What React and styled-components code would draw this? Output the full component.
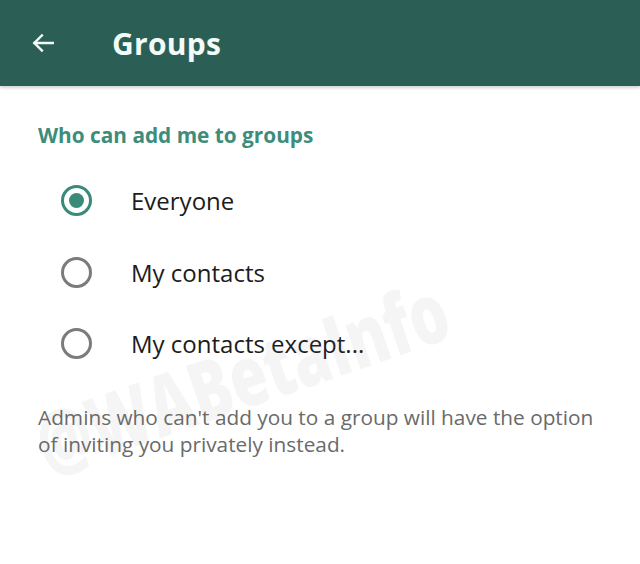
import React, { useState } from "react";
import styled, { createGlobalStyle } from "styled-components";

const GlobalStyle = createGlobalStyle`
  html, body {
    margin: 0;
    padding: 0;
    background: #ffffff;
    font-family: "Open Sans", "Noto Sans", sans-serif;
  }
`;

const Page = styled.div`
  position: relative;
  width: 640px;
  height: 564px;
  overflow: hidden;
  background: #ffffff;
`;

const Toolbar = styled.div`
  height: 86px;
  background: #2b5f56;
  display: flex;
  align-items: center;
  padding-left: 28px;
  box-shadow: 0 2px 3px rgba(0, 0, 0, 0.18);
`;

const BackButton = styled.button`
  width: 30px;
  height: 30px;
  padding: 0;
  border: none;
  background: none;
  display: flex;
  align-items: center;
  justify-content: center;
  margin-right: 54px;
  cursor: pointer;
`;

const Title = styled.h1`
  margin: 0;
  color: #f2fbf8;
  font-size: 30px;
  font-weight: 700;
  letter-spacing: 0.3px;
`;

const Content = styled.div`
  padding: 35px 38px 0 38px;
`;

const SectionTitle = styled.div`
  color: #3d8c7c;
  font-size: 20.8px;
  font-weight: 700;
  margin-bottom: 16px;
`;

const Options = styled.div`
  display: flex;
  flex-direction: column;
`;

const Option = styled.label`
  display: flex;
  align-items: center;
  height: 71.5px;
  cursor: pointer;
`;

const Radio = styled.span`
  box-sizing: border-box;
  width: 31px;
  height: 31px;
  margin-left: 23px;
  margin-right: 39px;
  border-radius: 50%;
  border: 3px solid ${(p) => (p.checked ? "#3a8a7a" : "#7b7b7b")};
  display: flex;
  align-items: center;
  justify-content: center;
  &::after {
    content: "";
    width: 15px;
    height: 15px;
    border-radius: 50%;
    background: #3a8a7a;
    display: ${(p) => (p.checked ? "block" : "none")};
  }
`;

const OptionLabel = styled.span`
  font-size: 24px;
  color: #1c1c1c;
`;

const Note = styled.p`
  margin: 24px 0 0 0;
  font-size: 20.8px;
  line-height: 27px;
  color: #6a6a6a;
`;

const Watermark = styled.div`
  position: absolute;
  left: 52px;
  top: 402px;
  transform: rotate(-19deg) scaleX(0.72);
  transform-origin: left bottom;
  font-size: 84px;
  font-weight: 800;
  line-height: 1;
  color: rgba(120, 120, 120, 0.07);
  pointer-events: none;
  white-space: nowrap;
`;

const options = ["Everyone", "My contacts", "My contacts except..."];

const App = () => {
  const [selected, setSelected] = useState(0);
  return (
    <Page>
      <GlobalStyle />
      <Toolbar>
        <BackButton aria-label="Back">
          <svg width="26" height="26" viewBox="0 0 24 24" fill="none">
            <path
              d="M21 12H4M11 5l-7 7 7 7"
              stroke="#f2fbf8"
              strokeWidth="2.2"
              strokeLinecap="square"
            />
          </svg>
        </BackButton>
        <Title>Groups</Title>
      </Toolbar>
      <Content>
        <SectionTitle>Who can add me to groups</SectionTitle>
        <Options>
          {options.map((item, i) => (
            <Option key={item} onClick={() => setSelected(i)}>
              <Radio checked={selected === i} />
              <OptionLabel>{item}</OptionLabel>
            </Option>
          ))}
        </Options>
        <Note>
          Admins who can't add you to a group will have the option of inviting
          you privately instead.
        </Note>
      </Content>
      <Watermark>@WABetaInfo</Watermark>
    </Page>
  );
};

export default App;
